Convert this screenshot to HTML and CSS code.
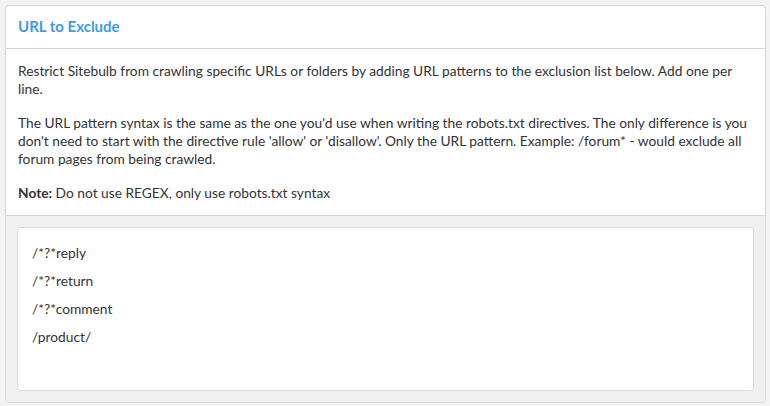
FILE: index.html
```html
<!DOCTYPE html>
<html>
<head>
<meta charset="utf-8">
<link rel="stylesheet" href="styles.css">
</head>
<body>
<div class="card">
  <div class="card-header">URL to Exclude</div>
  <div class="card-body">
    <p>Restrict Sitebulb from crawling specific URLs or folders by adding URL patterns to the exclusion list below. Add one per line.</p>
    <p>The URL pattern syntax is the same as the one you'd use when writing the robots.txt directives. The only difference is you don't need to start with the directive rule 'allow' or 'disallow'. Only the URL pattern. Example: /forum* - would exclude all forum pages from being crawled.</p>
    <p><strong>Note:</strong> Do not use REGEX, only use robots.txt syntax</p>
  </div>
  <div class="card-footer">
    <div class="textbox">
      <div class="line">/*?*reply</div>
      <div class="line">/*?*return</div>
      <div class="line">/*?*comment</div>
      <div class="line">/product/</div>
    </div>
  </div>
</div>
</body>
</html>
```

FILE: styles.css
```css
html, body {
  margin: 0;
  padding: 0;
  background: #f3f3f3;
}
body {
  padding: 5px 4px 4px 5px;
  font-family: Lato, "Open Sans", sans-serif;
  font-size: 13.75px;
  color: #333;
}
.card {
  background: #fff;
  border: 1px solid #d6d6d6;
  border-radius: 4px;
  overflow: hidden;
}
.card-header {
  height: 43px;
  box-sizing: border-box;
  padding: 11px 12px 0;
  font-size: 15px;
  font-weight: 700;
  color: #3d9be9;
  line-height: 18px;
  border-bottom: 1px solid #d6d6d6;
}
.card-body {
  padding: 13px 12px 13px;
  line-height: 18px;
}
.card-body p {
  margin: 0 0 16px;
}
.card-body p:last-child {
  margin-bottom: 0;
}
.card-body strong {
  font-weight: 700;
}
.card-footer {
  background: #f0f0f0;
  border-top: 1px solid #d6d6d6;
  padding: 11px 11px 11px 11px;
}
.textbox {
  background: #fff;
  border: 1px solid #dcdcdc;
  border-radius: 3px;
  height: 151px;
  box-sizing: content-box;
  padding: 11px 14px 0;
  line-height: 28px;
  color: #333;
}
```
